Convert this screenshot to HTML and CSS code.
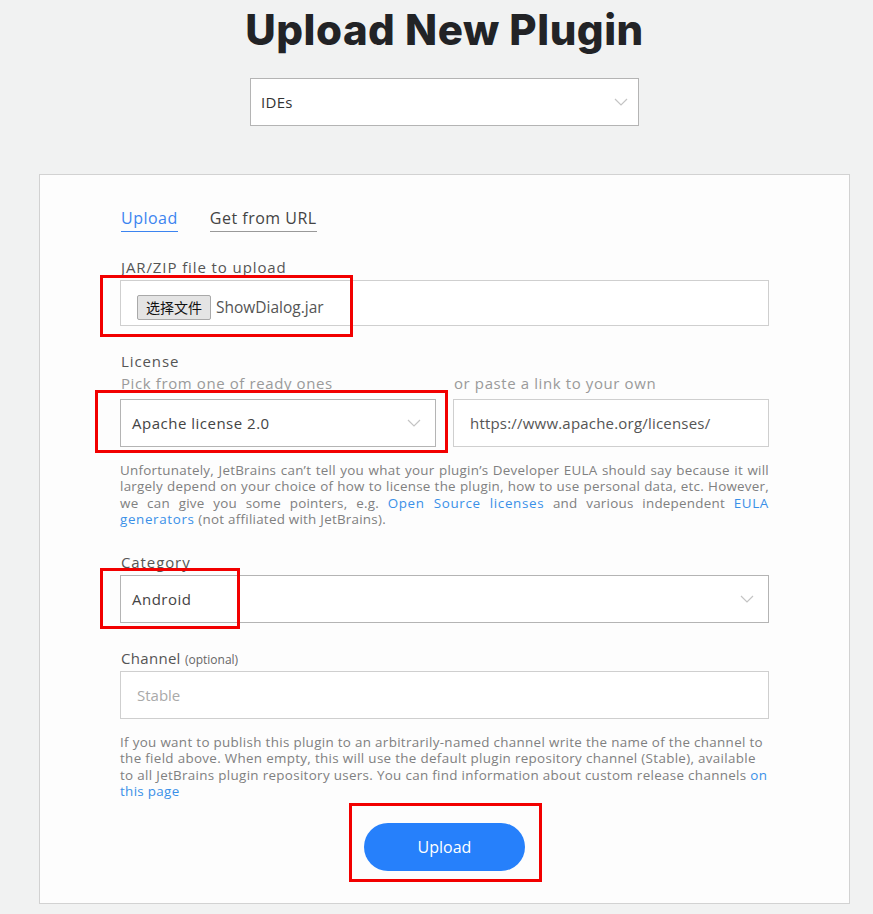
FILE: index.html
```html
<!DOCTYPE html>
<html>
<head>
<meta charset="utf-8">
<link rel="stylesheet" href="styles.css">
</head>
<body>
<div class="page">
  <h1 class="title">Upload New Plugin</h1>
  <div class="ide-select">
    <span>IDEs</span>
    <svg class="chev" width="14" height="8" viewBox="0 0 14 8"><polyline points="1,1 7,7 13,1" fill="none" stroke="#c4c4c4" stroke-width="1.2"/></svg>
  </div>
  <section class="card">
    <div class="tabs">
      <span class="tab active">Upload</span>
      <span class="tab">Get from URL</span>
    </div>

    <div class="field">
      <div class="label">JAR/ZIP file to upload</div>
      <div class="box file-box">
        <span class="file-btn">选择文件</span>
        <span class="file-name">ShowDialog.jar</span>
      </div>
    </div>

    <div class="field">
      <div class="label">License</div>
      <div class="license-row">
        <div class="col-left">
          <div class="sublabel">Pick from one of ready ones</div>
          <div class="box select">
            <span class="sel-text">Apache license 2.0</span>
            <svg class="chev" width="14" height="8" viewBox="0 0 14 8"><polyline points="1,1 7,7 13,1" fill="none" stroke="#c4c4c4" stroke-width="1.2"/></svg>
          </div>
        </div>
        <div class="col-right">
          <div class="sublabel">or paste a link to your own</div>
          <div class="box url">https://www.apache.org/licenses/</div>
        </div>
      </div>
      <p class="note justify">Unfortunately, JetBrains can’t tell you what your plugin’s Developer EULA should say because it will largely depend on your choice of how to license the plugin, how to use personal data, etc. However, we can give you some pointers, e.g. <a>Open Source licenses</a> and various independent <a>EULA generators</a> (not affiliated with JetBrains).</p>
    </div>

    <div class="field">
      <div class="label">Category</div>
      <div class="box select">
        <span class="sel-text">Android</span>
        <svg class="chev" width="14" height="8" viewBox="0 0 14 8"><polyline points="1,1 7,7 13,1" fill="none" stroke="#c4c4c4" stroke-width="1.2"/></svg>
      </div>
    </div>

    <div class="field channel">
      <div class="label">Channel <small>(optional)</small></div>
      <div class="box placeholder">Stable</div>
      <p class="note">If you want to publish this plugin to an arbitrarily-named channel write the name of the channel to the field above. When empty, this will use the default plugin repository channel (Stable), available to all JetBrains plugin repository users. You can find information about custom release channels <a>on this page</a></p>
    </div>

    <div class="actions">
      <button class="upload-btn">Upload</button>
    </div>

    <div class="mark m1"></div>
    <div class="mark m2"></div>
    <div class="mark m3"></div>
    <div class="mark m4"></div>
  </section>
</div>
</body>
</html>
```
FILE: styles.css
```css
html, body {
  margin: 0;
  padding: 0;
  background: #f1f2f2;
  font-family: "Open Sans", "Noto Sans", sans-serif;
  color: #444;
  overflow: hidden;
}
.page {
  width: 811px;
  margin-left: 39px;
  display: flex;
  flex-direction: column;
  align-items: center;
}
.title {
  margin: 0;
  padding-top: 4px;
  height: 52px;
  font-family: Inter, "Open Sans", sans-serif;
  font-weight: 800;
  font-size: 42px;
  line-height: 52px;
  color: #222326;
  letter-spacing: 0.5px;
}
.ide-select {
  margin-top: 22px;
  box-sizing: border-box;
  width: 389px;
  height: 48px;
  background: #fff;
  border: 1px solid #b4b4b4;
  display: flex;
  align-items: center;
  justify-content: space-between;
  padding: 0 10px;
  font-size: 15px;
  letter-spacing: 0.3px;
  color: #333;
}
.card {
  position: relative;
  align-self: stretch;
  margin-top: 48px;
  background: #fdfdfd;
  border: 1px solid #d2d2d2;
  padding: 33px 80px 32px 80px;
  display: flex;
  flex-direction: column;
}
.tabs {
  display: flex;
  gap: 32px;
  padding-left: 1px;
}
.tab {
  font-size: 16px;
  line-height: 20px;
  letter-spacing: 0.5px;
  padding-bottom: 3px;
  border-bottom: 1px solid #999;
  color: #444;
}
.tab.active {
  color: #3c84f0;
  border-bottom-color: #3c84f0;
}
.field {
  display: flex;
  flex-direction: column;
  margin-top: 25px;
}
.label {
  font-size: 15px;
  line-height: 20px;
  letter-spacing: 0.9px;
  color: #555;
  margin-bottom: 3px;
  padding-left: 1px;
}
.channel .label {
  letter-spacing: 0.3px;
  margin-bottom: 1px;
}
.label small {
  font-size: 12px;
  letter-spacing: 0;
  color: #666;
}
.box {
  box-sizing: border-box;
  height: 48px;
  background: #fff;
  border: 1px solid #cfcfcf;
  display: flex;
  align-items: center;
  padding: 0 16px;
  font-size: 15px;
  color: #444;
}
.file-box {
  height: 46px;
  padding-left: 16px;
  gap: 5px;
}
.file-btn {
  font-family: "Noto Sans CJK SC", sans-serif;
  font-size: 14px;
  height: 25px;
  line-height: 23px;
  box-sizing: border-box;
  padding: 0 8px;
  background: #e4e4e4;
  border: 1px solid #a9a9a9;
  border-radius: 2px;
  color: #111;
  margin-top: 8px;
}
.file-name {
  font-size: 15.5px;
  color: #555;
  margin-top: 8px;
}
.select {
  justify-content: space-between;
  padding: 0 14px 0 11px;
  border-color: #b4b4b4;
}
.sel-text {
  letter-spacing: 0.5px;
}
.license-row {
  display: flex;
  gap: 17px;
}
.col-left { width: 316px; display: flex; flex-direction: column; }
.col-right { flex: 1; display: flex; flex-direction: column; }
.sublabel {
  font-size: 15px;
  line-height: 18px;
  letter-spacing: 0.6px;
  color: #9a9a9a;
  margin-bottom: 7px;
  padding-left: 1px;
}
.url {
  padding-left: 16px;
  font-size: 15px;
  letter-spacing: 0.2px;
  color: #555;
}
.note {
  margin: 15px 0 0 0;
  font-size: 13.4px;
  line-height: 16.3px;
  letter-spacing: 0.32px;
  color: #808080;
}
.note.justify {
  text-align: justify;
  letter-spacing: 0.25px;
}
.note.justify a {
  letter-spacing: 0.65px;
}
.note a {
  color: #3a90e8;
}
.placeholder {
  color: #a9a9a9;
  padding-left: 16px;
}
.actions {
  display: flex;
  justify-content: center;
  margin-top: 24px;
}
.upload-btn {
  width: 161px;
  height: 48px;
  border: none;
  border-radius: 24px;
  background: #2680fb;
  color: #fff;
  font-family: "Open Sans", sans-serif;
  font-size: 16px;
}
.mark {
  position: absolute;
  border: 3px solid #f20000;
  box-sizing: border-box;
}
.m1 { left: 60px; top: 100px; width: 253px; height: 62px; }
.m2 { left: 55px; top: 215px; width: 353px; height: 63px; }
.m3 { left: 60px; top: 393px; width: 140px; height: 61px; }
.m4 { left: 309px; top: 628px; width: 193px; height: 79px; }
```
